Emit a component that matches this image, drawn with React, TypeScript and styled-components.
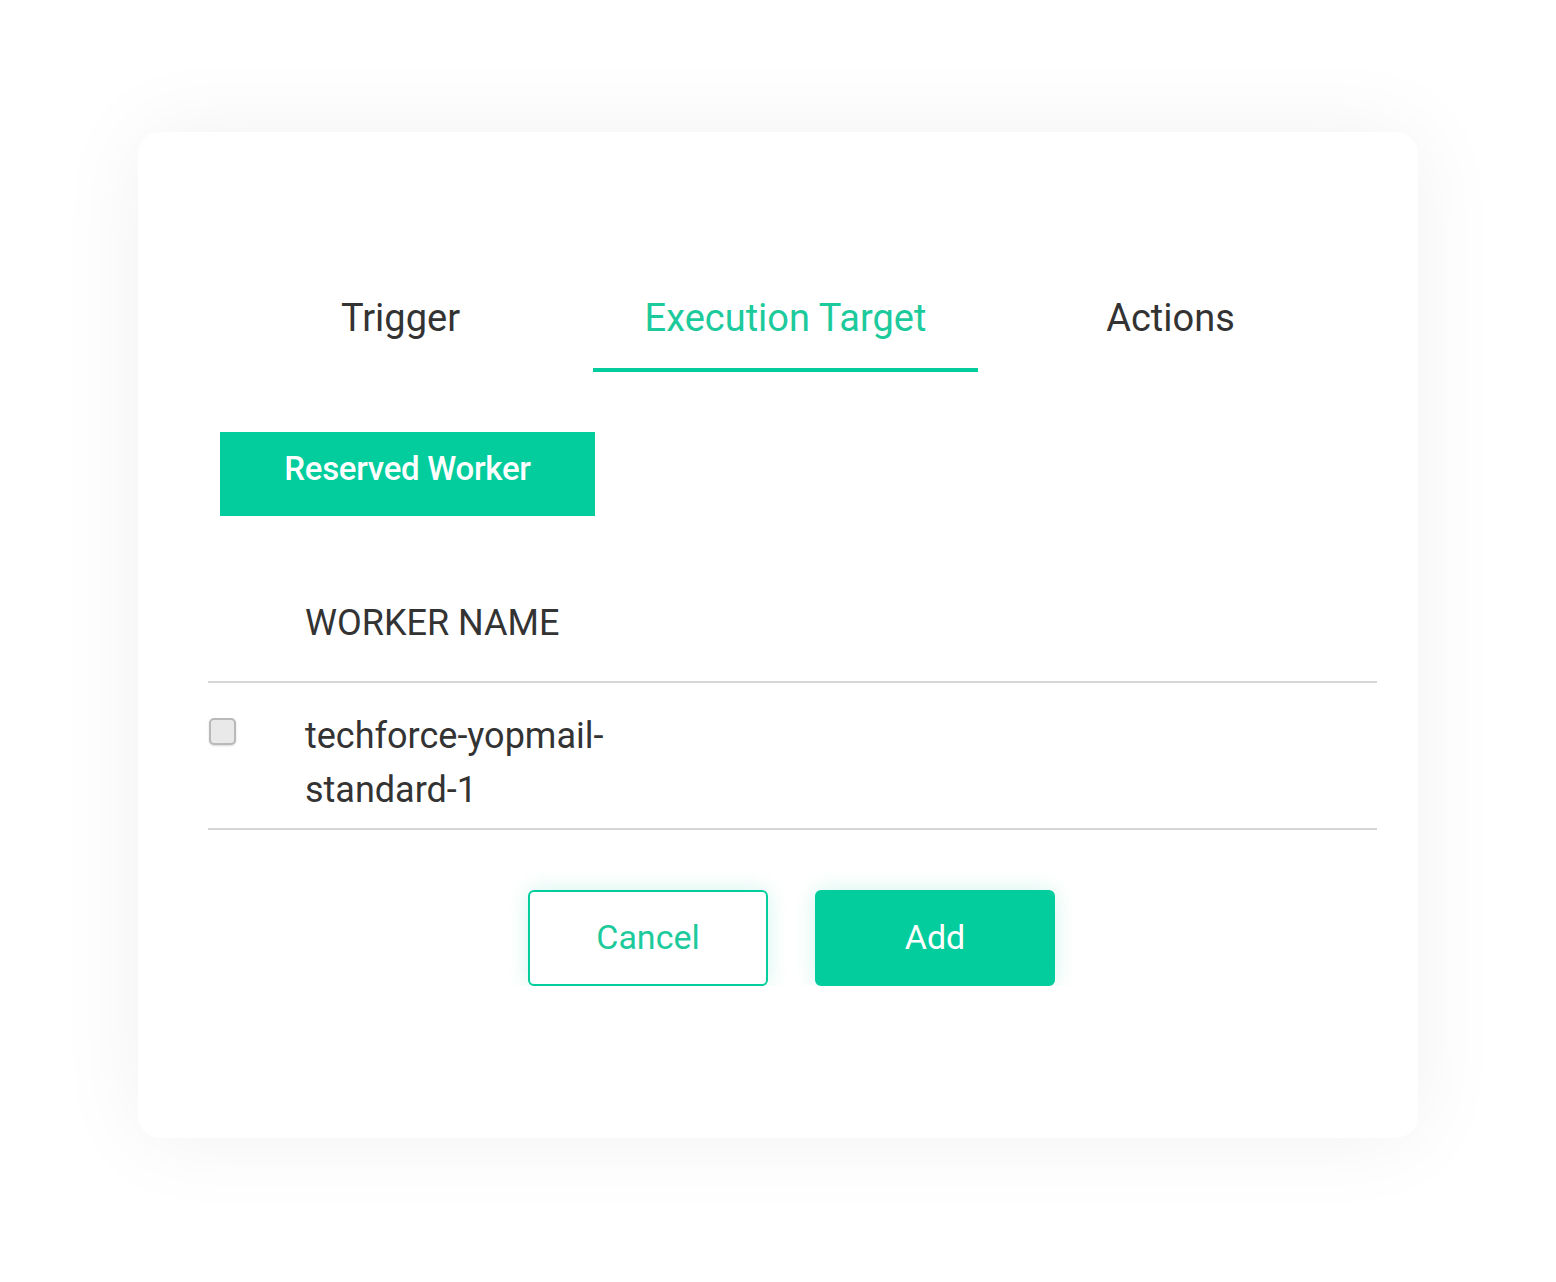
import { useState } from "react"
import styled, { createGlobalStyle } from "styled-components"

const teal = "#03cd9d"

const GlobalStyle = createGlobalStyle`
  body {
    margin: 0;
    background: #fff;
    font-family: Roboto, "Liberation Sans", Arial, sans-serif;
  }
  * { box-sizing: border-box; }
`

const tabs = ["Trigger", "Execution Target", "Actions"]

const App = () => {
  const [active, setActive] = useState(1)
  const [checked, setChecked] = useState(false)

  return (
    <>
      <GlobalStyle />
      <Page>
        <Card>
          <TabBar>
            {tabs.map((t, i) => (
              <Tab key={t} $active={i === active} onClick={() => setActive(i)}>
                {t}
              </Tab>
            ))}
          </TabBar>

          <ReservedButton>Reserved Worker</ReservedButton>

          <Table>
            <thead>
              <tr>
                <CheckHead />
                <HeadCell>WORKER NAME</HeadCell>
                <FillCell />
              </tr>
            </thead>
            <tbody>
              <tr>
                <CheckCell>
                  <Check $checked={checked} onClick={() => setChecked(!checked)} />
                </CheckCell>
                <NameCell>techforce-yopmail-standard-1</NameCell>
                <FillCell />
              </tr>
            </tbody>
          </Table>

          <Footer>
            <ButtonRow>
              <ActionButton>Cancel</ActionButton>
              <ActionButton $primary>Add</ActionButton>
            </ButtonRow>
          </Footer>
        </Card>
      </Page>
    </>
  )
}

const Page = styled.div`
  padding: 132px 0 144px;
  display: flex;
  justify-content: center;
`

const Card = styled.div`
  width: 1280px;
  height: 1006px;
  background: #fff;
  border-radius: 22px;
  box-shadow: 0 0 90px rgba(0, 0, 0, 0.06);
  padding: 163px 41px 0 70px;
`

const TabBar = styled.div`
  display: grid;
  grid-template-columns: repeat(3, 385px);
`

const Tab = styled.div<{ $active?: boolean }>`
  font-size: 38px;
  line-height: 46px;
  text-align: center;
  padding-bottom: 27px;
  cursor: pointer;
  color: ${({ $active }) => ($active ? "#1dca9c" : "#333")};
  border-bottom: 4px solid ${({ $active }) => ($active ? teal : "transparent")};
`

const ReservedButton = styled.div`
  margin: 60px 0 0 12px;
  width: 375px;
  height: 84px;
  background: ${teal};
  color: #fff;
  font-size: 33px;
  font-weight: 500;
  letter-spacing: -0.3px;
  display: flex;
  align-items: center;
  justify-content: center;
  padding-bottom: 12px;
`

const Table = styled.table`
  width: 100%;
  margin-top: 50px;
  border-collapse: collapse;
  color: #333;
  font-size: 36px;
`

const HeadCell = styled.th`
  text-align: left;
  font-weight: 400;
  line-height: 42px;
  padding: 36px 0 37px;
  border-bottom: 2px solid #d6d6d6;
  width: 340px;
`

const CheckHead = styled.th`
  width: 97px;
  border-bottom: 2px solid #d6d6d6;
`

const FillCell = styled.td`
  border-bottom: 2px solid #d6d6d6;
`

const CheckCell = styled.td`
  vertical-align: top;
  padding-top: 35px;
  border-bottom: 2px solid #d6d6d6;
`

const NameCell = styled.td`
  line-height: 54px;
  padding: 26px 0 11px;
  border-bottom: 2px solid #d6d6d6;
`

const Check = styled.div<{ $checked?: boolean }>`
  width: 27px;
  height: 27px;
  border-radius: 5px;
  border: 2px solid #b9b9b9;
  background: ${({ $checked }) => ($checked ? teal : "#e9e9e9")};
  box-shadow: 0 1px 2px rgba(0, 0, 0, 0.15);
  cursor: pointer;
`

const Footer = styled.div`
  display: flex;
  justify-content: center;
  margin-top: 35px;
  padding-right: 2px;
`

const ButtonRow = styled.div`
  display: flex;
  gap: 47px;
  padding: 25px 25px 0;
  overflow: hidden;
`

const ActionButton = styled.button<{ $primary?: boolean }>`
  width: 240px;
  height: 96px;
  border-radius: 6px;
  font-family: Roboto, "Liberation Sans", Arial, sans-serif;
  font-size: 34px;
  cursor: pointer;
  border: 2px solid ${teal};
  background: ${({ $primary }) => ($primary ? teal : "#fff")};
  color: ${({ $primary }) => ($primary ? "#fff" : "#1dca9c")};
  box-shadow: 0 0 22px rgba(3, 205, 157, 0.18);
  padding-bottom: 4px;
`

export default App
